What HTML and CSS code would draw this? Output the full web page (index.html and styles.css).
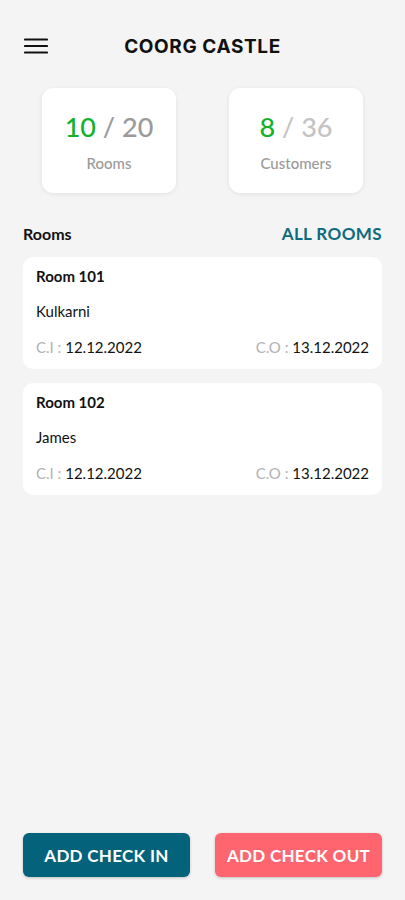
FILE: index.html
```html
<!DOCTYPE html>
<html>
<head>
<meta charset="utf-8">
<link rel="stylesheet" href="styles.css">
</head>
<body>
<div class="app">
  <header class="topbar">
    <button class="menu" aria-label="menu">
      <svg width="24" height="16" viewBox="0 0 24 16"><path d="M1 1.5h22M1 8h22M1 14.5h22" stroke="#111" stroke-width="2.2" stroke-linecap="round"/></svg>
    </button>
    <h1 class="title">COORG CASTLE</h1>
  </header>

  <section class="stats">
    <div class="stat">
      <div class="stat-num"><span class="hi">10</span> <span class="sl">/</span> <span class="tot">20</span></div>
      <div class="stat-label">Rooms</div>
    </div>
    <div class="stat">
      <div class="stat-num"><span class="hi">8</span> <span class="sl light">/</span> <span class="tot light">36</span></div>
      <div class="stat-label">Customers</div>
    </div>
  </section>

  <section class="rooms">
    <div class="rooms-head">
      <span class="rooms-title">Rooms</span>
      <a class="all">ALL ROOMS</a>
    </div>
    <div class="card">
      <div class="room-name">Room 101</div>
      <div class="guest">Kulkarni</div>
      <div class="dates">
        <span><span class="lbl">C.I : </span>12.12.2022</span>
        <span><span class="lbl">C.O : </span>13.12.2022</span>
      </div>
    </div>
    <div class="card">
      <div class="room-name">Room 102</div>
      <div class="guest">James</div>
      <div class="dates">
        <span><span class="lbl">C.I : </span>12.12.2022</span>
        <span><span class="lbl">C.O : </span>13.12.2022</span>
      </div>
    </div>
  </section>

  <footer class="actions">
    <button class="btn in">ADD CHECK IN</button>
    <button class="btn out">ADD CHECK OUT</button>
  </footer>
</div>
</body>
</html>
```
FILE: styles.css
```css
* { box-sizing: border-box; }
html, body { margin: 0; padding: 0; }
body {
  background: #f4f4f4;
  font-family: Lato, "Noto Sans", sans-serif;
  color: #111;
}
.app {
  height: 900px;
  display: flex;
  flex-direction: column;
  padding: 0 23px 23px;
}
.topbar {
  height: 40px;
  margin-top: 26px;
  display: flex;
  align-items: center;
  position: relative;
}
.menu {
  border: 0;
  background: none;
  padding: 0;
  margin-left: 1px;
  display: flex;
}
.title {
  position: absolute;
  left: 0; right: 0;
  margin: 0;
  text-align: center;
  font-family: Inter, "Liberation Sans", sans-serif;
  font-weight: 700;
  font-size: 19px;
  letter-spacing: 0.6px;
  pointer-events: none;
}
.stats {
  margin-top: 22px;
  display: flex;
  justify-content: center;
  gap: 53px;
}
.stat {
  width: 134px;
  height: 105px;
  background: #fff;
  border-radius: 11px;
  box-shadow: 0 1px 4px rgba(0,0,0,0.08);
  display: flex;
  flex-direction: column;
  align-items: center;
  padding-top: 22px;
}
.stat-num {
  font-size: 27px;
  line-height: 34px;
  font-weight: 500;
}
.hi { color: #12b22c; }
.sl, .tot { color: #9a9a9a; }
.light { color: #c4c4c4; }
.stat-label {
  margin-top: 10px;
  font-size: 15px;
  color: #9a9a9a;
  font-weight: 500;
}
.rooms { margin-top: 28px; }
.rooms-head {
  display: flex;
  justify-content: space-between;
  align-items: center;
  height: 24px;
  margin-bottom: 12px;
}
.rooms-title { font-size: 16px; font-weight: 700; }
.all {
  color: #0e6a7e;
  font-size: 17px;
  font-weight: 700;
  letter-spacing: 0.4px;
}
.card {
  background: #fff;
  border-radius: 10px;
  padding: 9px 13px 11px;
  margin-bottom: 14px;
  height: 112px;
}
.room-name { font-size: 15px; font-weight: 700; line-height: 20px; }
.guest { font-size: 15px; line-height: 20px; margin-top: 15px; }
.dates {
  margin-top: 16px;
  display: flex;
  justify-content: space-between;
  font-size: 15px;
  line-height: 20px;
}
.lbl { color: #b2b2b2; }
.actions {
  margin-top: auto;
  display: flex;
  justify-content: space-between;
}
.btn {
  width: 167px;
  height: 44px;
  border: 0;
  border-radius: 6px;
  color: #fff;
  font-family: Lato, "Noto Sans", sans-serif;
  font-size: 17px;
  font-weight: 700;
  letter-spacing: 0.3px;
  box-shadow: 0 1px 3px rgba(0,0,0,0.2);
}
.in { background: #04637a; }
.out { background: #ff656f; }
```
